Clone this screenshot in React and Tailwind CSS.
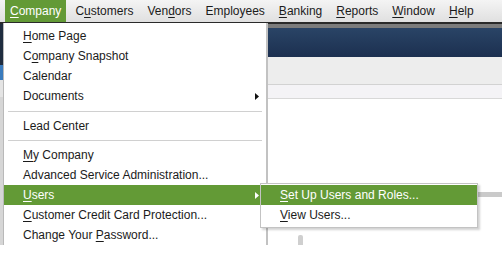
import React from 'react';

const GREEN = 'bg-[#639a36]';

// text with one underlined mnemonic letter
const Label = ({ text, u }) => {
  if (u === undefined) return <span>{text}</span>;
  return (
    <span>
      {text.slice(0, u)}
      <span className="underline underline-offset-[2px]">{text[u]}</span>
      {text.slice(u + 1)}
    </span>
  );
};

const Arrow = ({ white }) => (
  <svg width="4" height="7" viewBox="0 0 4 7" className="absolute right-[7px]">
    <path d="M0 0 L4 3.5 L0 7 Z" fill={white ? '#ffffff' : '#111111'} />
  </svg>
);

const topMenus = [
  { text: 'Company', u: 0, active: true },
  { text: 'Customers', u: 1 },
  { text: 'Vendors', u: 3 },
  { text: 'Employees' },
  { text: 'Banking', u: 0 },
  { text: 'Reports', u: 0 },
  { text: 'Window', u: 0 },
  { text: 'Help', u: 0 },
];

const companyItems = [
  { text: 'Home Page', u: 0 },
  { text: 'Company Snapshot', u: 1 },
  { text: 'Calendar' },
  { text: 'Documents', sub: true },
  { sep: 'mt-[5px] mb-[4px]' },
  { text: 'Lead Center' },
  { sep: 'mt-[4px] mb-[4px]' },
  { text: 'My Company', u: 0 },
  { text: 'Advanced Service Administration...' },
  { text: 'Users', u: 0, sub: true, active: true },
  { text: 'Customer Credit Card Protection...', u: 0 },
  { text: 'Change Your Password...', u: 12 },
];

const MenuRow = ({ item }) => (
  <div
    className={`relative flex items-center h-[20px] pl-[19px] ${
      item.active ? `${GREEN} text-white` : 'text-[#1b1b1b]'
    }`}
  >
    <Label text={item.text} u={item.u} />
    {item.sub && <Arrow white={item.active} />}
  </div>
);

export default function App() {
  return (
    <div className="relative w-[502px] h-[256px] overflow-hidden bg-white text-[12px] leading-[14px] font-['Liberation_Sans',Arial,sans-serif]">
      {/* menu bar */}
      <div className="flex h-[22px] pl-[5px] gap-[4px] bg-gradient-to-b from-[#f4f4f4] to-[#e0e0e0]">
        {topMenus.map((m) => (
          <div
            key={m.text}
            className={`flex items-center h-full px-[5px] ${
              m.active ? `${GREEN} text-white` : 'text-[#1b1b1b]'
            }`}
          >
            <Label text={m.text} u={m.u} />
          </div>
        ))}
      </div>
      <div className="h-[2px] bg-[#2a2a2a]" />

      {/* application behind the menu */}
      <div className="flex">
        <div className="flex flex-col w-[3px]">
          <div className="h-[41px] bg-[#1f2c3f]" />
          <div className="h-[15px] bg-[#3a7bbd]" />
          <div className="h-[17px] bg-[#e4e4e4]" />
          <div className="h-[148px] bg-[#d6d6d6]" />
        </div>
        <div className="flex-1 flex flex-col">
          <div className="h-[4px] bg-[#7c7c7c]" />
          <div className="h-[29px] bg-gradient-to-b from-[#2a4466] to-[#1c3050]" />
          <div className="h-[28px] bg-[#ededed] border-b border-[#d2d2d2]" />
          <div className="h-[14px] bg-[#f4f3f6] border-b border-[#d8d8d8]" />
          <div className="flex justify-end mt-[93px]">
            <div className="w-[24px] h-[5px] bg-[#cacaca]" />
          </div>
          <div className="mt-[38px] ml-[295px] w-[5px] h-[10px] rounded-t-[2px] bg-[#cfcfcf]" />
        </div>
      </div>

      {/* Company dropdown */}
      <div className="absolute left-[3px] top-[23px] w-[265px] pt-[3px] bg-white border-l border-[#b9b9b9] border-r-[2px] border-r-[#c2c2c2]">
        {companyItems.map((item, i) =>
          item.sep ? (
            <div key={i} className={`h-px mx-[4px] bg-[#d0d0d0] ${item.sep}`} />
          ) : (
            <MenuRow key={i} item={item} />
          )
        )}
      </div>

      {/* Users submenu */}
      <div className="absolute left-[260px] top-[183px] w-[218px] h-[45px] pt-[1px] bg-white border border-[#c3c3c3] shadow-[2px_2px_2px_rgba(0,0,0,0.18)]">
        <div className={`flex items-center h-[20px] pl-[19px] ${GREEN} text-white`}>
          <Label text="Set Up Users and Roles..." u={0} />
        </div>
        <div className="flex items-center h-[20px] pl-[19px] text-[#1b1b1b]">
          <Label text="View Users..." u={0} />
        </div>
      </div>
    </div>
  );
}
